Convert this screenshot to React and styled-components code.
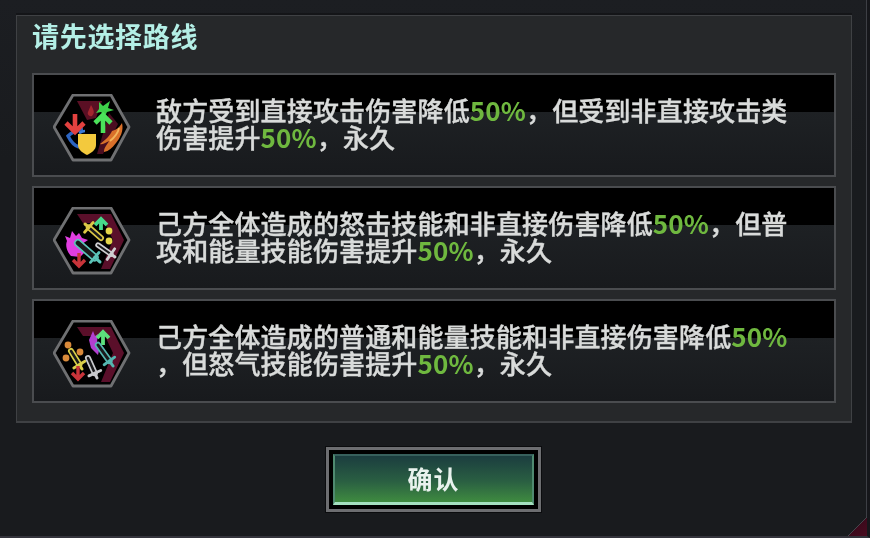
import React from 'react'
import styled, { createGlobalStyle } from 'styled-components'

const GlobalStyle = createGlobalStyle`
  html, body {
    margin: 0;
    padding: 0;
    background: #131419;
  }
`

const Page = styled.div`
  position: relative;
  width: 870px;
  height: 538px;
  overflow: hidden;
  box-sizing: border-box;
  background: linear-gradient(180deg, #1c1e22 0%, #191b1e 30%, #191b1e 100%);
  font-family: "Noto Sans CJK SC", "Noto Sans", sans-serif;
  border-right: 3px solid #16171b;
  border-bottom: 2px solid #34343c;
  padding: 15px 0 0 16px;

  &::before {
    content: "";
    position: absolute;
    top: 0;
    right: 0;
    bottom: 0;
    width: 1px;
    background: #3d3f45;
  }
`

const CornerCut = styled.div`
  position: absolute;
  right: -3px;
  bottom: -2px;
  width: 24px;
  height: 24px;
  background: linear-gradient(
    135deg,
    transparent 48%,
    #45464c 48%,
    #45464c 52%,
    #3c0a1c 52%,
    #4d0c20 100%
  );
`

const Panel = styled.section`
  box-sizing: border-box;
  width: 836px;
  height: 408px;
  padding: 0 15px;
  background: #26282a;
  border: 1px solid #3f4144;
  border-bottom-width: 2px;
  box-shadow: 0 -2px 0 #141518;
`

const Title = styled.h2`
  margin: 0;
  height: 57px;
  box-sizing: border-box;
  font-size: 27px;
  font-weight: 700;
  line-height: 40px;
  letter-spacing: 0.7px;
  color: #b4efe6;
  filter: blur(0.3px);
`

const CardList = styled.div`
  display: flex;
  flex-direction: column;
  gap: 9px;
`

const Card = styled.article`
  box-sizing: border-box;
  height: 104px;
  width: 804px;
  display: flex;
  align-items: center;
  gap: 25px;
  padding: 0 0 0 19px;
  border: 2px solid #4a4c4f;
  background: linear-gradient(
    180deg,
    #000 0,
    #000 37px,
    #1e2124 37px,
    #181a1d 100%
  );
`

const IconSvg = styled.svg`
  flex: none;
  width: 78px;
  height: 68px;
  margin-top: 6px;
  filter: blur(0.4px);
`

const Desc = styled.p`
  margin: -4px 0 0;
  font-size: 26px;
  font-weight: 500;
  line-height: 27px;
  letter-spacing: 0.15px;
  white-space: nowrap;
  color: #d9dbda;
  -webkit-text-stroke: 0.4px #d9dbda;
  filter: blur(0.3px);
`

const Num = styled.span`
  color: #6fb83f;
  font-weight: 700;
  -webkit-text-stroke: 0;
`

const Footer = styled.div`
  display: flex;
  justify-content: center;
  padding: 24px 16px 0 0;
`

const ConfirmOuter = styled.div`
  box-sizing: border-box;
  width: 215px;
  height: 65px;
  padding: 4px;
  background: #000;
  border: 3px solid #6d6e71;
  box-shadow: 0 0 0 1px #0b0c0e;
`

const ConfirmButton = styled.button`
  display: block;
  box-sizing: border-box;
  width: 100%;
  height: 100%;
  padding: 0 0 2px;
  font-family: inherit;
  font-size: 25px;
  font-weight: 700;
  letter-spacing: 1px;
  color: #e9f2ee;
  border: 2px solid #4f8a70;
  border-top-color: #37605c;
  border-bottom: 3px solid #a5e0c0;
  background: linear-gradient(180deg, #1b3d3f 0%, #2a5f42 55%, #3f8b40 100%);
  filter: blur(0.3px);
`

const Hex = () => (
  <polygon points="13,41 32,9 70,9 88,41 70,74 32,74" fill="#000" stroke="#6f7072" strokeWidth="2.8" strokeLinejoin="round" />
)

const Arrow = ({ x, y1, y2, color, w = 3.4, head = 7 }) => {
  const dir = y2 > y1 ? 1 : -1
  return (
    <path
      d={`M${x} ${y1}L${x} ${y2}M${x - head} ${y2 - dir * head}L${x} ${y2}L${x + head} ${y2 - dir * head}`}
      fill="none"
      stroke={color}
      strokeWidth={w}
    />
  )
}

const Sword = ({ x1, y1, x2, y2, color, w = 6 }) => {
  const dx = x2 - x1
  const dy = y2 - y1
  const len = Math.hypot(dx, dy)
  const nx = -dy / len
  const ny = dx / len
  const gx = x1 + dx * 0.76
  const gy = y1 + dy * 0.76
  return (
    <g fill="none" stroke={color} strokeLinecap="round">
      <path d={`M${x1} ${y1}L${gx} ${gy}`} strokeWidth={w} />
      <path d={`M${x1} ${y1}L${gx} ${gy}`} strokeWidth={w - 3.4} stroke="#1a1a1c" />
      <path d={`M${gx + nx * 6.5} ${gy + ny * 6.5}L${gx - nx * 6.5} ${gy - ny * 6.5}`} strokeWidth="2.8" />
      <path d={`M${gx} ${gy}L${x2} ${y2}`} strokeWidth="3" />
    </g>
  )
}

const Flame = ({ d, color }) => <path d={d} fill={color} />

const RouteIconA = () => (
  <IconSvg viewBox="12 8 78 68">
    <Hex />
    <polygon points="36,15 61,15 55,32 46,34" fill="#5a0f24" />
    <polygon points="68,27 77,38 62,68 56,68" fill="#4a0d20" />
    <path d="M50 19C53 24 54 27 51 30C48 31 46 28 47 26Z" fill="#a3262f" />
    <path d="M58 16L62 20L69 15L67 22L73 24L66 26L64 30L60 26L55 27L58 23Z" fill="#3fd04a" />
    <Arrow x={62} y1={47} y2={29} color="#4be25a" w={4.6} head={8} />
    <path d="M42 43C36 44 30 47 27 50C30 56 34 60 38 61" fill="none" stroke="#2c64c0" strokeWidth="3.4" />
    <path d="M44 45C42 45 40 46 38 47" fill="none" stroke="#3b7bd8" strokeWidth="2.6" />
    <Arrow x={34} y1={28} y2={46} color="#e2413f" w={4.6} head={9} />
    <path d="M37 48L55 48L55 59C55 64 50 67 46 69C42 67 37 64 37 59Z" fill="#f3c93d" />
    <Flame d="M81 37C83 45 79 52 75 57C71 62 68 65 63 66C63 61 66 59 68 55C64 57 61 59 59 58C64 54 69 50 71 45C75 44 78 42 81 37Z" color="#d9702a" />
    <path d="M78 42C77 47 74 51 69 55" fill="none" stroke="#f2b45a" strokeWidth="1.8" />
  </IconSvg>
)

const RouteIconB = () => (
  <IconSvg viewBox="12 8 78 68">
    <Hex />
    <polygon points="36,15 70,15 83,41 69,70 60,70 72,41 64,24 42,24" fill="#5a0f2a" />
    <Arrow x={60} y1={31} y2={20} color="#47d98a" w={3.8} head={6} />
    <Sword x1={60} y1={39} x2={44} y2={25} color="#dcc847" w={6} />
    <circle cx="68" cy="32" r="3.4" fill="#e4d64a" />
    <circle cx="68" cy="42" r="3.4" fill="#e4d64a" />
    <Flame d="M31 32L35 37L38 34L41 39L47 41L41 45L47 50L39 58L30 57C26 53 24 46 26 42L24 37L29 39Z" color="#e13ee0" />
    <Sword x1={37} y1={44} x2={59} y2={63} color="#5cc4b8" w={8} />
    <Arrow x={38} y1={54} y2={67} color="#c8343a" w={3.4} head={6} />
    <Sword x1={57} y1={46} x2={74} y2={58} color="#cfcfd2" w={5.4} />
  </IconSvg>
)

const RouteIconC = () => (
  <IconSvg viewBox="12 8 78 68">
    <Hex />
    <polygon points="36,15 70,15 83,41 69,70 60,70 72,41 64,24 42,24" fill="#5a0f2a" />
    <Flame d="M52 19L54 24L57 22L56 30L59 34L57 43L50 36L48 28Z" color="#b23fd0" />
    <Arrow x={62} y1={33} y2={20} color="#5ce07c" w={3.8} head={6} />
    <Sword x1={57} y1={33} x2={72} y2={54} color="#55b6b0" w={6.4} />
    <circle cx="27" cy="33" r="3.4" fill="#d98a3a" />
    <circle cx="39" cy="40" r="3.4" fill="#d98a3a" />
    <circle cx="25" cy="46" r="3.4" fill="#d98a3a" />
    <Sword x1={30} y1={39} x2={41} y2={57} color="#d9cf4a" w={6} />
    <Sword x1={47} y1={46} x2={56} y2={66} color="#c9cacd" w={6} />
    <Arrow x={37} y1={54} y2={67} color="#c8343a" w={3.4} head={6} />
  </IconSvg>
)

const routes = [
  {
    id: 'a',
    Icon: RouteIconA,
    lines: [
      ['敌方受到直接攻击伤害降低', '50%', '，但受到非直接攻击类'],
      ['伤害提升', '50%', '，永久'],
    ],
  },
  {
    id: 'b',
    Icon: RouteIconB,
    lines: [
      ['己方全体造成的怒击技能和非直接伤害降低', '50%', '，但普'],
      ['攻和能量技能伤害提升', '50%', '，永久'],
    ],
  },
  {
    id: 'c',
    Icon: RouteIconC,
    lines: [
      ['己方全体造成的普通和能量技能和非直接伤害降低', '50%', ''],
      ['，但怒气技能伤害提升', '50%', '，永久'],
    ],
  },
]

const App = () => (
  <Page>
    <GlobalStyle />
    <Panel>
      <Title>请先选择路线</Title>
      <CardList>
        {routes.map(({ id, Icon, lines }) => (
          <Card key={id}>
            <Icon />
            <Desc>
              {lines.map(([before, num, after], i) => (
                <React.Fragment key={i}>
                  {before}
                  <Num>{num}</Num>
                  {after}
                  {i === 0 && <br />}
                </React.Fragment>
              ))}
            </Desc>
          </Card>
        ))}
      </CardList>
    </Panel>
    <Footer>
      <ConfirmOuter>
        <ConfirmButton>确认</ConfirmButton>
      </ConfirmOuter>
    </Footer>
    <CornerCut />
  </Page>
)

export default App
